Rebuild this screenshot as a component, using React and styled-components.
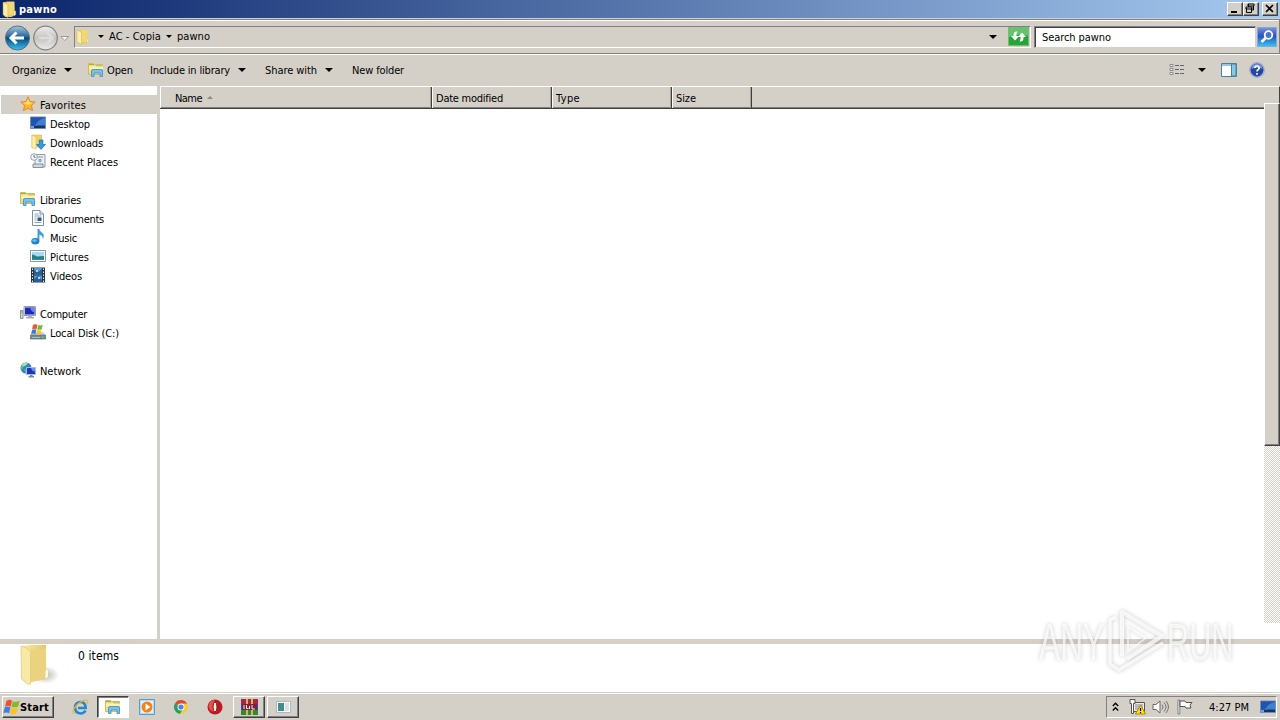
import React, { useLayoutEffect, useRef, useState } from 'react';
import styled, { createGlobalStyle, css } from 'styled-components';

const favorites = [
    { id: 'desktop', name: 'Desktop', w: 40 },
    { id: 'downloads', name: 'Downloads', w: 53 },
    { id: 'recent', name: 'Recent Places', w: 68 },
];

const libraries = [
    { id: 'documents', name: 'Documents', w: 54 },
    { id: 'music', name: 'Music', w: 27 },
    { id: 'pictures', name: 'Pictures', w: 39 },
    { id: 'videos', name: 'Videos', w: 32 },
];

const groups = [
    { id: 'star', name: 'Favorites', w: 46, active: true, items: favorites },
    { id: 'libraries', name: 'Libraries', w: 41, items: libraries },
    { id: 'computer', name: 'Computer', w: 47, items: [{ id: 'disk', name: 'Local Disk (C:)', w: 69 }] },
    { id: 'network', name: 'Network', w: 41, items: [] },
];

// spreads the letters so that a label takes the width Tahoma would give it
function Label({ w, bold, children }) {
    const ref = useRef(null);
    const [spacing, setSpacing] = useState(0);

    useLayoutEffect(() => {
        const natural = ref.current.getBoundingClientRect().width;
        setSpacing((w - natural) / String(children).length);
    }, []);

    return (
        <LabelStyled $w={w} $bold={bold}>
            <span ref={ref} style={{ letterSpacing: spacing }}>{children}</span>
        </LabelStyled>
    );
}

function Folder({ size = 16 }) {
    return (
        <svg width={size} height={size} viewBox="0 0 16 16">
            <path d="M2 1.500 6 .5h6.500l.5 12.500-3 2H4L2 13z" fill="#e9cb62" />
            <path d="M6 1h6.500v12H6z" fill="#f0d878" />
            <path d="M2 1.200 6.500 3v12.500L2 13z" fill="#fbeea8" stroke="#d5b146" strokeWidth=".5" />
            <path d="M12 9.500h1.800V13l-2 1z" fill="#fff8d0" stroke="#d5b146" strokeWidth=".5" />
        </svg>
    );
}

function Flag({ size = 16 }) {
    return (
        <svg width={size} height={size} viewBox="0 0 16 16">
            <path d="M3.500 1.500q3-1.800 5 0L7.300 7Q4.500 5.500 1.800 7.300z" fill="#e9532b" />
            <path d="M9.200 2q3 1.500 6.500-.5L14.300 7q-3 1.600-6.300.2z" fill="#83b92d" />
            <path d="M1.600 8q2.500-1.600 5.400-.2l-1.300 5.700q-2.400-1.500-5.400 0z" fill="#3a82d8" />
            <path d="M7.800 8q2.900 1.500 6.200 0l-1.400 5.700q-2.700 1.500-6.200 0z" fill="#fbc128" />
        </svg>
    );
}

function Icon({ id }) {
    switch (id) {
        case 'star':
            return (
                <svg width="16" height="16" viewBox="0 0 16 16">
                    <path d="m8 .8 2.100 4.700 5.200.5-3.900 3.500 1.200 5.200L8 12l-4.600 2.700 1.200-5.200L.7 6l5.200-.5z" fill="#fcb72d" stroke="#e8892a" />
                    <path d="m8 3 1.400 3.500 3.600.3-5 2-5-2 3.600-.3z" fill="#ffe571" />
                </svg>
            );
        case 'desktop':
            return (
                <svg width="16" height="16" viewBox="0 0 16 16">
                    <path d="M.5 2h15v11.500H.5z" fill="#2c5ba8" stroke="#6f8fc0" />
                    <path d="M1 2.500h14v8L9 8 1 11z" fill="#2253ae" />
                    <path d="M15 3v7Q8 9 5 11q3-7 10-8z" fill="#4080d2" />
                    <path d="M1 11h14v2H1z" fill="#17345f" />
                    <path d="M1 11h3v2H1z" fill="#63a8e0" />
                </svg>
            );
        case 'downloads':
            return (
                <svg width="16" height="16" viewBox="0 0 16 16">
                    <path d="M2 1h9.500v12H5L2 14z" fill="#f0d26a" stroke="#d9b84e" strokeWidth=".6" />
                    <path d="m2 1 4 2v12l-4-1.500z" fill="#fdf2b4" stroke="#dcbc56" strokeWidth=".6" />
                    <path d="M9.300 6h3.600v4.500h2.600L11 15.400 6.600 10.500h2.700z" fill="#339bdb" stroke="#1e68a6" strokeWidth=".7" />
                </svg>
            );
        case 'recent':
            return (
                <svg width="16" height="16" viewBox="0 0 16 16">
                    <path d="M5 1.500h10V14H5z" fill="#e9eef2" stroke="#8b9baa" />
                    <path d="M3 11h10v3.500H3zM7 4h6M9 6.500h2v2H9z" fill="#cdd8e0" stroke="#8394a3" />
                    <circle cx="4" cy="4" r="3.300" fill="#f7fafc" stroke="#93a2b0" />
                    <path d="M4 2v2.300h1.600" fill="none" stroke="#607384" />
                </svg>
            );
        case 'libraries':
            return (
                <svg width="16" height="16" viewBox="0 0 16 16">
                    <path d="M.5 1.500h5l1 1h8v10H.5z" fill="#f3dc83" stroke="#d8b95a" />
                    <path d="M1 2.500h5M8 4h6" stroke="#7fb96b" />
                    <path d="M1 4.500h14v3H1z" fill="#fff1ac" />
                    <path d="M3.500 14.500V9q0-1.500 1.500-1.500h8q1.500 0 1.500 1.500v5.500h-2.500V11h-6v3.500z" fill="#77c3eb" stroke="#4b9bcb" />
                </svg>
            );
        case 'documents':
            return (
                <svg width="16" height="16" viewBox="0 0 16 16">
                    <path d="M2.500.5H10l3.500 3.500v11.500h-11z" fill="#fff" stroke="#7890ab" />
                    <path d="M10 .5V4h3.500" fill="#dce6f0" stroke="#7890ab" />
                    <path d="M4.500 4h4M4.500 6h7M4.500 8h2M4.500 10h2M4.500 12.500h7" stroke="#8aa0ba" />
                    <path d="M7.500 7.500h4V11h-4z" fill="#28568f" />
                </svg>
            );
        case 'music':
            return (
                <svg width="16" height="16" viewBox="0 0 16 16">
                    <path d="M7.500 0h1.800q.4 2.500 3 4 2.800 2.200.6 6.200.2-3.900-3.500-4.500v6.800H7.500z" fill="#3ba0dc" />
                    <ellipse cx="5.300" cy="12.300" rx="4" ry="3.200" fill="#1d83cd" />
                    <ellipse cx="4.500" cy="11.500" rx="2.200" ry="1.300" fill="#6cc2ef" />
                </svg>
            );
        case 'pictures':
            return (
                <svg width="16" height="16" viewBox="0 0 16 16">
                    <path d="M.5 2.500h15v11H.5z" fill="#fff" stroke="#8797a8" />
                    <path d="M2 4h12v8H2z" fill="#a6dcf3" />
                    <path d="M2 6.500q3 .5 5 2l7-.5v4H2z" fill="#2e7e76" />
                    <path d="M2 10.500h12V12H2z" fill="#2b86bd" />
                </svg>
            );
        case 'videos':
            return (
                <svg width="16" height="16" viewBox="0 0 16 16">
                    <path d="M1 .5h14v15H1z" fill="#27333f" />
                    <path d="M4 1h8v6.500H4zM4 8.500h8V15H4z" fill="#4f9ed5" />
                    <path d="m4 3 4 2 4-3v5H4zM4 12l4-3 4 4v2H4z" fill="#2a5f9c" />
                    <path d="M6 3h2v2H6zM8 10h2v2H8z" fill="#b8d2c6" />
                    <path d="M2.500 1.500v14M13.500 1.500v14" stroke="#e6edf2" strokeDasharray="1.500 1.500" />
                </svg>
            );
        case 'computer':
            return (
                <svg width="16" height="16" viewBox="0 0 16 16">
                    <path d="M.5 5.500h2.500v8H.5z" fill="#d3d9d1" stroke="#8b958d" />
                    <path d="M1 7h1.500" stroke="#4ba63c" />
                    <path d="M4 1.500h11.500v9H4z" fill="#dfe3ee" stroke="#969cb4" />
                    <path d="M5 2.500h9.500V9.500H5z" fill="#1c2bb2" />
                    <path d="M10 2.500h4.500V7q-3 .5-4.500-4.500z" fill="#6e85ea" />
                    <path d="M8 10.500h4V12h2v1.500H6V12h2z" fill="#a9afba" />
                </svg>
            );
        case 'disk':
            return (
                <svg width="16" height="16" viewBox="0 0 16 16">
                    <path d="M2.500 8h11l2 3.500H.5z" fill="#cfd6da" />
                    <path d="M.5 11h15v4H.5z" fill="#768c98" stroke="#566a75" strokeWidth=".7" />
                    <path d="M2 13.500h8" stroke="#a8b9c0" />
                    <path d="M12 12.500h2v1.500h-2z" fill="#5ccd44" />
                    <path d="M3 .7q2.500-1 4.500 0l-.9 4.500q-2.200-1-4.500 0z" fill="#ee582c" />
                    <path d="M8.200 1q2.200 1 4.600-.2l-1.100 4.500q-2.200 1-4.400.2z" fill="#78b92e" />
                    <path d="M2 5.900q2.300-1 4.400-.1l-.9 4.300q-2.300-1-4.400.1z" fill="#367bd5" />
                    <path d="M7.200 6q2.200 1 4.400-.1l-1 4.300q-2.200 1-4.400.1z" fill="#fcc329" />
                </svg>
            );
        case 'network':
            return (
                <svg width="16" height="16" viewBox="0 0 16 16">
                    <circle cx="6" cy="6" r="5.500" fill="#2b86c8" />
                    <path d="M3 1.500q4-1.500 5 0L6 4 3.500 5 2 8 .5 5.500zM4 7l3 1-1 3.500z" fill="#66c060" />
                    <path d="M1.500 3.500Q4 0 8 1.500L4 4z" fill="#ade2da" />
                    <path d="M6.500 5.500h9v7h-9z" fill="#1c36ba" stroke="#b0b9d0" />
                    <path d="M11 6h4v3.500q-3 0-4-3.500z" fill="#6d92ee" />
                    <path d="M10 13h2.500v1H14v1.500H8.500V14H10z" fill="#7b889d" />
                </svg>
            );
        default:
            return null;
    }
}

function Watermark() {
    return (
        <WatermarkStyled width="220" height="84" viewBox="0 0 220 84">
            <g fill="#fff" fillOpacity=".72" fontFamily="'Liberation Sans', Arial, sans-serif" fontSize="52">
                <text transform="translate(5 56) scale(.61 1)">ANY</text>
                <text transform="translate(133 56) scale(.59 1)">RUN</text>
            </g>
            <g fill="none" stroke="#fff" strokeOpacity=".75" strokeWidth="4" strokeLinejoin="round">
                <path d="M88 52V8l40 24-35 23" />
                <path d="M82 13l-6 3v44l9 6 44-27" strokeWidth="3.500" />
                <path d="M94 23v24l18-13z" strokeWidth="1.500" />
            </g>
        </WatermarkStyled>
    );
}

function App() {
    return (
        <Window>
            <GlobalStyle />
            <TitleBar>
                <Folder size={17} />
                <Label w={38} bold>pawno</Label>
                <Spacer />
                <Caption>
                    <svg width="13" height="11"><path d="M3 8h6v2H3z" /></svg>
                </Caption>
                <Caption>
                    <svg width="13" height="11"><path d="M4.500 1v3M4 1h6v2H4zM9.500 3v4H8M2 4h6v2H2zM2.500 5v4.500h5V5" fill="none" stroke="#000" /></svg>
                </Caption>
                <Caption $gap>
                    <svg width="13" height="11"><path d="m3 2 7 7M10 2 3 9" stroke="#000" strokeWidth="1.700" /></svg>
                </Caption>
            </TitleBar>

            <NavBar>
                <svg width="72" height="30" viewBox="0 0 72 30">
                    <defs>
                        <linearGradient id="back" x2="0" y2="1">
                            <stop stopColor="#a5c9df" />
                            <stop offset=".45" stopColor="#286697" />
                            <stop offset=".5" stopColor="#07497f" />
                            <stop offset="1" stopColor="#35c5ed" />
                        </linearGradient>
                        <linearGradient id="forward" x2="0" y2="1">
                            <stop stopColor="#eeeeed" />
                            <stop offset=".5" stopColor="#c4c3c1" />
                            <stop offset="1" stopColor="#ebebea" />
                        </linearGradient>
                    </defs>
                    <circle cx="17.500" cy="16" r="12" fill="url(#back)" stroke="#536e84" />
                    <path d="m16.500 10.500-5.500 5.500 5.500 5.500M12 16h12" fill="none" stroke="#fff" strokeWidth="3" />
                    <circle cx="45.500" cy="16" r="11.800" fill="url(#forward)" stroke="#858585" strokeWidth="1.300" />
                    <path d="m47 10.500 5.500 5.500-5.500 5.500M52 16H39" fill="none" stroke="#dddcdb" strokeWidth="2.500" />
                    <path d="M61 14.500h7.500l-3.700 4z" fill="#fff" stroke="#8b8882" strokeWidth=".8" />
                </svg>
                <Address>
                    <Folder />
                    <Arrow $small $left={7} />
                    <Label w={52}>AC - Copia</Label>
                    <Arrow $small $left={5} $right={5} />
                    <Label w={33}>pawno</Label>
                    <Spacer />
                    <Arrow $right={11} />
                    <svg width="21" height="19" viewBox="0 0 21 19">
                        <path d="M.5.5h20v18H.5z" fill="#27a638" stroke="#7cb77c" />
                        <path d="M1 1h19v8Q10 6 1 10z" fill="#66c36c" />
                        <path d="M9.500 4.500Q5.500 4 5.500 8v1H3l4 4.500L11 9H8.500q-.5-2 1-4.500zM11.500 14.500q4 .5 4-3.500v-1H18l-4-4.500L10 10h2.500q.5 2-1 4.500z" fill="#fff" />
                    </svg>
                </Address>
                <Search>
                    <Label w={69}>Search pawno</Label>
                </Search>
                <svg width="21" height="20" viewBox="0 0 21 20">
                    <defs>
                        <linearGradient id="search" x2="0" y2="1">
                            <stop stopColor="#7896de" />
                            <stop offset=".45" stopColor="#2a4fc1" />
                            <stop offset="1" stopColor="#35c8f0" />
                        </linearGradient>
                    </defs>
                    <path d="M.5.5h19v19H.5z" fill="url(#search)" stroke="#86a7d8" />
                    <circle cx="11.500" cy="8" r="3.800" fill="#4773d0" stroke="#fff" strokeWidth="1.800" />
                    <path d="m8.500 11-4 4" stroke="#fff" strokeWidth="2.600" />
                </svg>
            </NavBar>

            <Toolbar>
                <Label w={44}>Organize</Label>
                <Arrow $left={8} $right={16} />
                <Icon id="libraries" />
                <Gap $w={3} />
                <Label w={26}>Open</Label>
                <Gap $w={17} />
                <Label w={80}>Include in library</Label>
                <Arrow $left={8} $right={19} />
                <Label w={52}>Share with</Label>
                <Arrow $left={8} $right={19} />
                <Label w={52}>New folder</Label>
                <Spacer />
                <svg width="16" height="14" viewBox="0 0 16 14">
                    <path d="M1 1.500h3v2H1zM1 5.500h3v2H1zM1 9.500h3v2H1z" fill="#fff" stroke="#88898b" />
                    <path d="M6 2.500h9M6 6.500h9M6 10.500h9" stroke="#5e6670" strokeDasharray="4 1" />
                </svg>
                <Arrow $left={13} $right={15} />
                <svg width="16" height="14" viewBox="0 0 16 14">
                    <path d="M.5.5h15v13H.5z" fill="#fff" stroke="#4c7e9d" />
                    <path d="M1 2h9.500" stroke="#9cc5da" strokeWidth="2" />
                    <path d="M10.500 1h4.500v12h-4.500z" fill="#8ac8e4" stroke="#4c7e9d" />
                </svg>
                <Gap $w={12} />
                <svg width="16" height="16" viewBox="0 0 16 16">
                    <circle cx="8" cy="8" r="7.200" fill="#2347a7" stroke="#a3afca" strokeWidth="1.500" />
                    <path d="M2.500 7Q3 2 8 2t5.500 5Q8 4.500 2.500 7z" fill="#7695db" />
                    <path d="M5.700 6Q6 4 8 4t2.200 1.800Q10.200 7 9 7.700 8 8.300 8 9.500M8 11v1.700" fill="none" stroke="#fff" strokeWidth="1.700" />
                </svg>
            </Toolbar>

            <Body>
                <Sidebar>
                    {groups.map((group) => (
                        <Group key={group.id}>
                            <Row $active={group.active}>
                                <Icon id={group.id} />
                                <Label w={group.w}>{group.name}</Label>
                            </Row>
                            {group.items.map((item) => (
                                <Row key={item.id} $nested>
                                    <Icon id={item.id} />
                                    <Label w={item.w}>{item.name}</Label>
                                </Row>
                            ))}
                        </Group>
                    ))}
                </Sidebar>
                <Files>
                    <Header>
                        <Column $w={272} $first>
                            <Label w={27}>Name</Label>
                            <svg width="6" height="4"><path d="M0 3 3 0l3 3z" fill="#8c8983" /></svg>
                        </Column>
                        <Column $w={120}><Label w={67}>Date modified</Label></Column>
                        <Column $w={120}><Label w={24}>Type</Label></Column>
                        <Column $w={80}><Label w={20}>Size</Label></Column>
                    </Header>
                </Files>
                <Scrollbar>
                    <ScrollTop />
                    <Thumb />
                    <Track />
                </Scrollbar>
            </Body>

            <Details>
                <svg width="40" height="44" viewBox="0 0 40 44">
                    <defs>
                        <linearGradient id="leaf">
                            <stop stopColor="#f8e9a4" />
                            <stop offset="1" stopColor="#e5c965" />
                        </linearGradient>
                        <radialGradient id="shade">
                            <stop stopColor="#777" stopOpacity=".5" />
                            <stop offset="1" stopColor="#777" stopOpacity="0" />
                        </radialGradient>
                    </defs>
                    <ellipse cx="26" cy="31" rx="13" ry="9" fill="url(#shade)" />
                    <path d="M2 2 10 1h16v34l-15 3z" fill="url(#leaf)" />
                    <path d="M11 5q8 2 15-1v31l-15 3z" fill="#ead27f" />
                    <path d="M1 2q6 1 9.500 6v32q-2 1-4-1l-5-4z" fill="#f9e9a7" stroke="#e0c46b" strokeWidth=".7" />
                    <path d="M25 27q3-4 3.500 0v5q-1 3-3.500 3z" fill="#fffbea" stroke="#dcc476" strokeWidth=".6" />
                </svg>
                <Label w={41}>0 items</Label>
            </Details>

            <Taskbar>
                <Start>
                    <Flag size={17} />
                    <Label w={29} bold>Start</Label>
                </Start>
                <Task $w={33}>
                    <svg width="17" height="16" viewBox="0 0 17 16">
                        <path d="M13.500 11.500Q12 14.500 8.500 14.500 3 14 3 8.500 3.500 3 8.500 3q5 0 5.200 6H6" fill="none" stroke="#2586d2" strokeWidth="2.600" />
                        <path d="M2 14.500Q-1 12 5 6T15.500 1.500q1 1-.5 3.500" fill="none" stroke="#e5b83a" strokeWidth="1.200" />
                    </svg>
                </Task>
                <Task $w={32} $state="pressed"><Icon id="libraries" /></Task>
                <Task $w={36}>
                    <svg width="16" height="16" viewBox="0 0 16 16">
                        <path d="M.5.5h15v15H.5z" fill="#b8d9ef" stroke="#5b9cce" />
                        <path d="M2 2h12v12H2z" fill="#e2f0f8" />
                        <circle cx="8" cy="8" r="5.500" fill="#f28316" />
                        <path d="m6.500 4.500 5 3.500-5 3.500z" fill="#fff" />
                    </svg>
                </Task>
                <Task $w={31}>
                    <svg width="14" height="14" viewBox="0 0 14 14">
                        <path d="M7 7 .9 3.500A7 7 0 0 1 13.100 3.700H7z" fill="#df4937" />
                        <path d="M7 7 .9 3.500A7 7 0 0 0 6 13.900L9.500 8z" fill="#28a158" />
                        <path d="M7 3.700h6.100A7 7 0 0 1 6 13.900L10 8z" fill="#f7cb38" />
                        <circle cx="7" cy="7" r="3.500" fill="#fff" />
                        <circle cx="7" cy="7" r="2.600" fill="#4a86e5" />
                    </svg>
                </Task>
                <Task $w={37}>
                    <svg width="16" height="16" viewBox="0 0 16 16">
                        <circle cx="8" cy="8" r="7.500" fill="#be1921" />
                        <path d="M1.500 7Q2 1 8 1q-4 6 0 12Q2 12 1.500 7z" fill="#dd5450" />
                        <ellipse cx="8" cy="8" rx="2" ry="5" fill="#eee" stroke="#8c1016" />
                    </svg>
                </Task>
                <Task $w={32} $state="raised">
                    <svg width="17" height="16" viewBox="0 0 17 16">
                        <path d="M0 0h17v5H0z" fill="#a62648" />
                        <path d="M0 5h17v6H0z" fill="#354ab2" />
                        <path d="M0 11h17v5H0z" fill="#2e8a38" />
                        <path d="M5 0h2v16H5zM10 0h2v16h-2z" fill="#d5b846" />
                        <path d="M1 5h15v6H1z" fill="#7a2338" />
                        <path d="M3 6v4M5.500 6v3.500h2M8.500 7v3M11 6v4h3" fill="none" stroke="#eee" />
                    </svg>
                </Task>
                <Gap $w={2} />
                <Task $w={32} $state="raised">
                    <svg width="15" height="12" viewBox="0 0 15 12">
                        <path d="M.5.5h14v11H.5z" fill="#fff" stroke="#a8bbc5" />
                        <path d="M2 2h6v8H2z" fill="#438c90" />
                        <path d="M9 2h4v8H9z" fill="#d6e4e5" />
                    </svg>
                </Task>
                <Spacer />
                <Tray>
                    <svg width="7" height="10" viewBox="0 0 7 10"><path d="m.8 4 2.700-2.700L6.200 4M.8 8.500l2.700-2.700 2.700 2.700" fill="none" stroke="#000" strokeWidth="1.400" /></svg>
                    <Gap $w={10} />
                    <svg width="17" height="16" viewBox="0 0 17 16">
                        <path d="M4.500 3.500h11v9h-11z" fill="#eee" stroke="#555" />
                        <path d="M6 5h8v6H6z" fill="#b8b8b5" />
                        <path d="M1 .5h5v4H4.500v10h-2v-10H1z" fill="#fff" stroke="#555" />
                        <path d="m11.500 6 5 9h-10z" fill="#ffe115" stroke="#b48b00" />
                        <path d="M11.500 9v3M11.500 13v1.200" stroke="#000" strokeWidth="1.200" />
                    </svg>
                    <Gap $w={6} />
                    <svg width="17" height="16" viewBox="0 0 17 16">
                        <path d="M1 5.500h3L8 2v12l-4-3.500H1z" fill="#fff" stroke="#666" />
                        <path d="M10 5.500q2 2.500 0 5M12 3.500q4 4.500 0 9M14 2q5 6 0 12" fill="none" stroke="#777" />
                    </svg>
                    <Gap $w={8} />
                    <svg width="16" height="16" viewBox="0 0 16 16">
                        <path d="M1 1h1.800v14H1z" fill="#fff" stroke="#666" strokeWidth=".8" />
                        <path d="M3 2h5l1 1.500h6L13 6l1 3H9L8 7.500H3z" fill="#fff" stroke="#555" />
                    </svg>
                    <Gap $w={16} />
                    <Label w={40}>4:27 PM</Label>
                    <Gap $w={11} />
                    <Icon id="desktop" />
                </Tray>
            </Taskbar>
            <Watermark />
        </Window>
    );
}

const GlobalStyle = createGlobalStyle`
    body {
        margin: 0;
        overflow: hidden;
    }
    svg {
        display: block;
        flex: none;
    }
`;

const raised = css`
    border: 1px solid;
    border-color: #fff #404040 #404040 #fff;
    box-shadow: inset -1px -1px #808080;
`;

const Window = styled.div`
    position: relative;
    display: flex;
    flex-direction: column;
    width: 1280px;
    height: 720px;
    box-sizing: border-box;
    background: #d4d0c8;
    color: #000;
    font: 11px 'DejaVu Sans Condensed', 'DejaVu Sans', sans-serif;
    * {
        box-sizing: border-box;
    }
`;

const LabelStyled = styled.div`
    flex: none;
    width: ${(p) => p.$w}px;
    padding-top: 2px;
    line-height: 14px;
    white-space: nowrap;
    font-weight: ${(p) => (p.$bold ? 'bold' : 'normal')};
`;

const Spacer = styled.div`
    flex: 1;
`;

const Gap = styled.div`
    flex: none;
    width: ${(p) => p.$w}px;
`;

const Arrow = styled.div`
    flex: none;
    width: 0;
    margin-left: ${(p) => p.$left || 0}px;
    margin-right: ${(p) => p.$right || 5}px;
    border: ${(p) => (p.$small ? 3 : 4)}px solid transparent;
    border-top-color: #000;
    border-bottom: 0;
`;

const TitleBar = styled.div`
    display: flex;
    align-items: center;
    flex: none;
    height: 18px;
    padding: 0 2px 0 1px;
    gap: 1px;
    background: linear-gradient(90deg, #0a246a, #a6caf0);
    ${LabelStyled} {
        color: #fff;
    }
    ${Spacer} {
        margin-right: -1px;
    }
`;

const Caption = styled.div`
    ${raised}
    width: 16px;
    height: 14px;
    margin-left: ${(p) => (p.$gap ? 2 : -1)}px;
    background: #d4d0c8;
`;

const NavBar = styled.div`
    display: flex;
    align-items: center;
    flex: none;
    height: 35px;
    margin-top: 1px;
    border: 1px solid #808080;
    border-width: 1px 1px 1px 0;
    box-shadow: inset 0 1px #fff, 0 1px #fff;
`;

const Address = styled.div`
    display: flex;
    align-items: center;
    width: 957px;
    height: 22px;
    margin-left: 2px;
    padding-right: 1px;
    border: 1px solid;
    border-color: #808080 #fff #fff #808080;
    ${LabelStyled} {
        padding-top: 0;
    }
`;

const Search = styled.div`
    display: flex;
    align-items: center;
    width: 222px;
    height: 22px;
    margin: 0 1px 0 3px;
    padding-left: 7px;
    background: #fff;
    border: 1px solid;
    border-color: #808080 #d4d0c8 #d4d0c8 #808080;
    box-shadow: inset 1px 1px #404040;
`;

const Toolbar = styled.div`
    display: flex;
    align-items: center;
    flex: none;
    height: 32px;
    padding: 0 15px 0 12px;
`;

const Body = styled.div`
    display: flex;
    flex: none;
    height: 553px;
`;

const Sidebar = styled.div`
    width: 160px;
    padding: 9px 0 0 1px;
    background: #fff;
    border-right: 3px solid #d4d0c8;
`;

const Group = styled.div`
    margin-bottom: 19px;
`;

const Row = styled.div`
    display: flex;
    align-items: center;
    gap: 4px;
    height: 19px;
    padding-left: ${(p) => (p.$nested ? 29 : 19)}px;
    background: ${(p) => (p.$active ? '#d4d0c8' : 'none')};
    svg {
        margin-bottom: 1px;
    }
`;

const Files = styled.div`
    flex: 1;
    background: #fff;
`;

const Header = styled.div`
    display: flex;
    height: 23px;
    background: #d4d0c8;
    border-top: 1px solid #fff;
    border-bottom: 1px solid #404040;
    box-shadow: inset 0 -1px #808080;
`;

const Column = styled.div`
    display: flex;
    align-items: center;
    gap: 5px;
    width: ${(p) => p.$w}px;
    padding-left: ${(p) => (p.$first ? 14 : 3)}px;
    border-left: 1px solid #fff;
    border-right: 1px solid #404040;
    box-shadow: inset -1px 0 #a5a29c;
`;

const Scrollbar = styled.div`
    display: flex;
    flex-direction: column;
    width: 16px;
    background: #fff;
`;

const ScrollTop = styled.div`
    height: 17px;
    background: #d4d0c8;
    border-top: 1px solid #fff;
    border-right: 1px solid #404040;
`;

const Thumb = styled.div`
    ${raised}
    height: 343px;
    background: #d4d0c8;
`;

const Track = styled.div`
    height: 177px;
    background: repeating-conic-gradient(#d4d0c8 0 25%, #fff 0 50%) 0 0 / 2px 2px;
`;

const Details = styled.div`
    display: flex;
    flex: none;
    gap: 18px;
    height: 53px;
    padding-left: 20px;
    border-top: 5px solid #d4d0c8;
    background: #fff;
    font-size: 12px;
    ${LabelStyled} {
        margin-top: 3px;
    }
`;

const Taskbar = styled.div`
    display: flex;
    align-items: center;
    flex: 1;
    padding: 1px 3px 0 2px;
    border-top: 1px solid #d4d0c8;
    box-shadow: inset 0 1px #fff;
`;

const Start = styled.div`
    ${raised}
    display: flex;
    align-items: center;
    width: 52px;
    height: 22px;
    margin-right: 10px;
`;

const Task = styled.div`
    display: flex;
    align-items: center;
    justify-content: center;
    width: ${(p) => p.$w}px;
    height: 22px;
    ${(p) => p.$state === 'raised' && raised}
    ${(p) => p.$state === 'pressed' && css`
        background: #fff;
        border: 1px solid;
        border-color: #404040 #fff #fff #404040;
        box-shadow: inset 1px 1px #808080;
    `}
`;

const Tray = styled.div`
    display: flex;
    align-items: center;
    width: 171px;
    height: 22px;
    padding-left: 5px;
    border: 1px solid;
    border-color: #808080 #fff #fff #808080;
`;

const WatermarkStyled = styled.svg`
    position: absolute;
    left: 1034px;
    top: 604px;
    overflow: visible;
    filter: drop-shadow(0 0 2px rgba(0, 0, 0, 0.28));
`;

export default App;
